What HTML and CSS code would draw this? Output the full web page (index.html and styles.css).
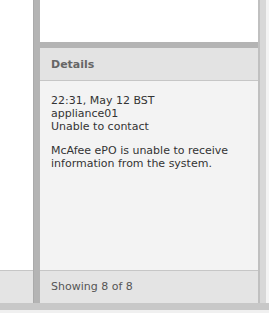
FILE: index.html
```html
<!DOCTYPE html>
<html>
<head>
<meta charset="utf-8">
<link rel="stylesheet" href="styles.css">
</head>
<body>
<div class="frame">
  <div class="main">
    <div class="left">
      <div class="left-body"></div>
      <div class="footer left-footer"></div>
    </div>
    <div class="splitter"></div>
    <div class="right">
      <div class="top-blank"></div>
      <div class="hbar"></div>
      <div class="header">Details</div>
      <div class="content">
        <p class="para">22:31, May 12 BST<br>appliance01<br>Unable to contact</p>
        <p class="para">McAfee ePO is unable to receive information from the system.</p>
      </div>
      <div class="footer">Showing 8 of 8</div>
    </div>
    <div class="rstrip"></div>
    <div class="redge"></div>
  </div>
  <div class="bottom-bar"></div>
  <div class="bottom-edge"></div>
</div>
</body>
</html>
```

FILE: styles.css
```css
html, body {
  margin: 0;
  padding: 0;
  background: #ffffff;
}
body {
  font-family: Tahoma, "DejaVu Sans", "Liberation Sans", sans-serif;
  width: 269px;
  height: 313px;
  overflow: hidden;
}
.frame {
  display: flex;
  flex-direction: column;
  height: 313px;
}
.main {
  display: flex;
  height: 303px;
}
.left {
  width: 33px;
  display: flex;
  flex-direction: column;
}
.left-body {
  flex: 1;
  background: #ffffff;
}
.splitter {
  width: 7px;
  background: #b4b4b4;
  border-left: 1px solid #aaaaaa;
  box-sizing: border-box;
}
.right {
  width: 218px;
  display: flex;
  flex-direction: column;
}
.top-blank {
  height: 42px;
  background: #ffffff;
}
.hbar {
  height: 6px;
  background: #b4b4b4;
}
.header {
  height: 33px;
  box-sizing: border-box;
  border-bottom: 1px solid #c6c6c6;
  background: #e3e3e3;
  color: #666666;
  font-weight: bold;
  font-size: 11px;
  padding-left: 11px;
  line-height: 33px;
}
.content {
  flex: 1;
  background: #f3f3f3;
  padding: 13px 11px 0 11px;
  color: #333333;
  font-size: 11px;
  line-height: 13px;
}
.para {
  margin: 0 0 11px 0;
}
.footer {
  height: 33px;
  box-sizing: border-box;
  border-top: 1px solid #c6c6c6;
  background: #e4e4e4;
  color: #555555;
  font-size: 11px;
  padding-left: 11px;
  line-height: 32px;
}
.left-footer {
  padding: 0;
}
.rstrip {
  width: 8px;
  background: #d8d8d8;
  border-left: 2px solid #c0c0c0;
  box-sizing: border-box;
}
.redge {
  width: 3px;
  background: #f4f4f4;
}
.bottom-bar {
  height: 7px;
  background: #c8c8c8;
}
.bottom-edge {
  height: 3px;
  background: #f0f0f0;
}
```
